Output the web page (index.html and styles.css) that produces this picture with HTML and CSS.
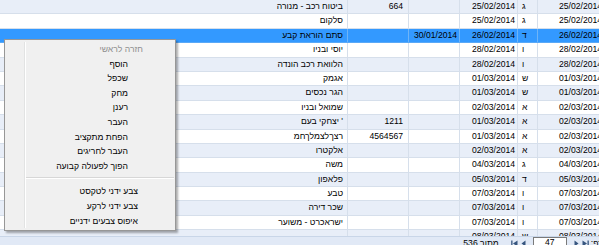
FILE: index.html
```html
<!DOCTYPE html>
<html lang="he">
<head>
<meta charset="utf-8">
<title>Grid</title>
<link rel="stylesheet" href="styles.css">
</head>
<body>
<div class="app">
  <div class="grid">
    <div class="row alt"><div class="c desc">ביטוח רכב - מנורה</div><div class="c amt">664</div><div class="c d2"></div><div class="c d1">25/02/2014</div><div class="c day">ג</div><div class="c d0">25/02/2014</div></div>
    <div class="row"><div class="c desc">סלקום</div><div class="c amt"></div><div class="c d2"></div><div class="c d1">25/02/2014</div><div class="c day">ג</div><div class="c d0">25/02/2014</div></div>
    <div class="row sel"><div class="c desc">סתם הוראת קבע</div><div class="c amt"></div><div class="c d2">30/01/2014</div><div class="c d1">26/02/2014</div><div class="c day">ד</div><div class="c d0">26/02/2014</div></div>
    <div class="row"><div class="c desc">יוסי ובניו</div><div class="c amt"></div><div class="c d2"></div><div class="c d1">28/02/2014</div><div class="c day">ו</div><div class="c d0">28/02/2014</div></div>
    <div class="row alt"><div class="c desc">הלוואת רכב הונדה</div><div class="c amt"></div><div class="c d2"></div><div class="c d1">28/02/2014</div><div class="c day">ו</div><div class="c d0">28/02/2014</div></div>
    <div class="row"><div class="c desc">אגמק</div><div class="c amt"></div><div class="c d2"></div><div class="c d1">01/03/2014</div><div class="c day">ש</div><div class="c d0">01/03/2014</div></div>
    <div class="row alt"><div class="c desc">הגר נכסים</div><div class="c amt"></div><div class="c d2"></div><div class="c d1">01/03/2014</div><div class="c day">ש</div><div class="c d0">01/03/2014</div></div>
    <div class="row"><div class="c desc">שמואל ובניו</div><div class="c amt"></div><div class="c d2"></div><div class="c d1">02/03/2014</div><div class="c day">א</div><div class="c d0">02/03/2014</div></div>
    <div class="row alt"><div class="c desc">' יצחקי בעם</div><div class="c amt">1211</div><div class="c d2"></div><div class="c d1">01/03/2014</div><div class="c day">א</div><div class="c d0">02/03/2014</div></div>
    <div class="row"><div class="c desc">רצךלצמלךחמ</div><div class="c amt">4564567</div><div class="c d2"></div><div class="c d1">01/03/2014</div><div class="c day">א</div><div class="c d0">02/03/2014</div></div>
    <div class="row alt"><div class="c desc">אלקטרו</div><div class="c amt"></div><div class="c d2"></div><div class="c d1">02/03/2014</div><div class="c day">א</div><div class="c d0">02/03/2014</div></div>
    <div class="row"><div class="c desc">משה</div><div class="c amt"></div><div class="c d2"></div><div class="c d1">04/03/2014</div><div class="c day">ג</div><div class="c d0">04/03/2014</div></div>
    <div class="row alt"><div class="c desc">פלאפון</div><div class="c amt"></div><div class="c d2"></div><div class="c d1">05/03/2014</div><div class="c day">ד</div><div class="c d0">05/03/2014</div></div>
    <div class="row"><div class="c desc">טבע</div><div class="c amt"></div><div class="c d2"></div><div class="c d1">07/03/2014</div><div class="c day">ו</div><div class="c d0">07/03/2014</div></div>
    <div class="row alt"><div class="c desc">שכר דירה</div><div class="c amt"></div><div class="c d2"></div><div class="c d1">07/03/2014</div><div class="c day">ו</div><div class="c d0">07/03/2014</div></div>
    <div class="row"><div class="c desc">ישראכרט - משוער</div><div class="c amt"></div><div class="c d2"></div><div class="c d1">07/03/2014</div><div class="c day">ו</div><div class="c d0">07/03/2014</div></div>
    <div class="row alt"><div class="c desc"></div><div class="c amt"></div><div class="c d2"></div><div class="c d1">08/03/2014</div><div class="c day">ש</div><div class="c d0">08/03/2014</div></div>
  </div>
  <div class="pager" dir="rtl">
    <span class="plabel">דף:</span>
    <svg class="pico" width="7" height="7" viewBox="0 0 7 7"><rect x="5.5" y="0.5" width="1.3" height="6" fill="#37567f"/><path d="M0.5 0.5 L5 3.5 L0.5 6.5 Z" fill="#37567f"/></svg>
    <svg class="pico" width="5" height="7" viewBox="0 0 5 7"><path d="M0.5 0.5 L4.5 3.5 L0.5 6.5 Z" fill="#37567f"/></svg>
    <span class="pinput">47</span>
    <svg class="pico" width="5" height="7" viewBox="0 0 5 7"><path d="M4.5 0.5 L0.5 3.5 L4.5 6.5 Z" fill="#37567f"/></svg>
    <svg class="pico" width="7" height="7" viewBox="0 0 7 7"><rect x="0.2" y="0.5" width="1.3" height="6" fill="#37567f"/><path d="M6.5 0.5 L2 3.5 L6.5 6.5 Z" fill="#37567f"/></svg>
    <span class="ptotal">מתוך 536</span>
  </div>
  <div class="menu" dir="rtl">
    <div class="mi dis">חזרה לראשי</div>
    <div class="mi">הוסף</div>
    <div class="mi">שכפל</div>
    <div class="mi">מחק</div>
    <div class="mi">רענן</div>
    <div class="mi">העבר</div>
    <div class="mi">הפחת מתקציב</div>
    <div class="mi">העבר לחריגים</div>
    <div class="mi">הפוך לפעולה קבועה</div>
    <div class="sep"></div>
    <div class="mi clr">צבע ידני לטקסט</div>
    <div class="mi clr">צבע ידני לרקע</div>
    <div class="mi clr">איפוס צבעים ידניים</div>
  </div>
</div>
</body>
</html>
```
FILE: styles.css
```css
html, body {
  margin: 0;
  padding: 0;
  overflow: hidden;
  background: #ffffff;
}
body {
  font-family: "Liberation Sans", Arial, "DejaVu Sans", sans-serif;
  font-size: 8.6px;
  color: #000000;
}
.app {
  position: relative;
  width: 604px;
  height: 245px;
}
.grid {
  height: 236px;
  overflow: hidden;
}
.row {
  display: grid;
  grid-template-columns: 347px 61px 51px 58px 20px 67px;
  height: 14.4px;
  box-sizing: border-box;
  border-bottom: 1px solid #d6dfeb;
  background: #ffffff;
}
.row.alt {
  background: #e8eef8;
}
.row.sel {
  background: #3399ff;
  border-bottom-color: #5aa9f7;
}
.c {
  box-sizing: border-box;
  line-height: 13.4px;
  white-space: nowrap;
  overflow: hidden;
  border-left: 1px solid #d6dfeb;
  text-align: right;
  padding-right: 2px;
}
.row.sel .c {
  border-left-color: #6fb4f7;
}
.c.desc {
  border-left: none;
  direction: rtl;
  padding-right: 4px;
}
.c.amt {
  padding-right: 5px;
}
.c.day {
  text-align: left;
  padding-left: 4px;
  padding-right: 0;
}
.pager {
  height: 20px;
  box-sizing: border-box;
  border-top: 1px solid #c9d6e8;
  background: #e1e9f6;
  display: flex;
  align-items: flex-start;
  padding-right: 1px;
  padding-top: 1px;
}
.plabel {
  line-height: 10px;
  margin-left: 2px;
}
.pico {
  margin-top: 2px;
  margin-left: 3px;
}
.pinput {
  width: 34px;
  height: 14px;
  box-sizing: border-box;
  border: 1px solid #7a7a7a;
  background: #ffffff;
  text-align: center;
  line-height: 9px;
  margin: -1px 4px 0 7px;
}
.ptotal {
  line-height: 10px;
  margin-right: 9px;
}
.menu {
  position: absolute;
  left: 4px;
  top: 39px;
  width: 172px;
  box-sizing: border-box;
  background: #f0f0f0;
  border: 1px solid #979797;
  box-shadow: 2px 2px 2px rgba(0, 0, 0, 0.32);
  padding: 2px 0;
}
.menu::before {
  content: "";
  position: absolute;
  left: 19px;
  top: 2px;
  bottom: 2px;
  width: 1px;
  background: #e2e3e3;
  border-right: 1px solid #ffffff;
}
.mi {
  height: 14.6px;
  line-height: 14.6px;
  padding-right: 47px;
  text-align: right;
  white-space: nowrap;
}
.mi.dis {
  color: #8d8d8d;
  padding-right: 32px;
}
.mi.clr {
  padding-right: 37px;
}
.sep {
  height: 1px;
  background: #d7d7d7;
  border-bottom: 1px solid #ffffff;
  margin: 4px 1px 5px 21px;
}
```
